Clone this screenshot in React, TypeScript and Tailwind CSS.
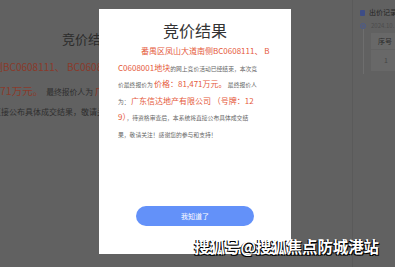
import React from 'react'

const RED = 'text-[8px] leading-none text-[#e5593b]'

function BackgroundPage() {
  return (
    <div className="flex h-full">
      {/* left article, dimmed by the overlay */}
      <div className="w-[352px] shrink-0 overflow-hidden">
        <div className="pl-[62px] pt-[30px] text-[13px] leading-[18px] text-[#2b2b2b]">竞价结果</div>
        <div className="-ml-[7px] mt-[9px] whitespace-nowrap leading-[20.5px]">
          <div className="text-[10px] text-[#8a3a2b]">侧BC0608111、 BC0608001地块</div>
          <div className="ml-[7px]">
            <span className="text-[10.5px] text-[#8a3a2b]">71万元。</span>
            <span className="ml-[3px] text-[7.8px] text-[#2e2e2e]">最终报价人为 </span>
            <span className="text-[10.5px] text-[#8a3a2b]">广东信达</span>
          </div>
          <div className="text-[8px] text-[#2e2e2e]">直接公布具体成交结果，敬请关注！</div>
        </div>
      </div>

      {/* right panel: bid records */}
      <div className="flex-1 border-l border-[#5a5a5a] pl-[7px] pt-[8px]">
        <div className="flex items-center gap-[4px]">
          <div className="h-[6px] w-[5px] rounded-[1px] bg-[#3e4d86]" />
          <span className="whitespace-nowrap text-[7px] leading-[9px] text-[#242424]">出价记录</span>
        </div>
        <div className="mt-[3px] flex">
          <div className="flex w-[6px] flex-col items-center">
            <div className="mt-[3px] flex h-[6px] w-[6px] items-center justify-center rounded-full border border-[#4b5a8c]">
              <div className="h-[2px] w-[2px] rounded-full bg-[#4b5a8c]" />
            </div>
            <div className="h-[45px] w-px bg-[#6e6e6e]" />
          </div>
          <div className="ml-[5px] flex-1">
            <div className="whitespace-nowrap text-[6px] leading-[12px] text-[#4c4c4c]">2024.10.</div>
            <div className="mt-[1px] h-[38px] bg-[#686868] text-[7px]">
              <div className="h-[17px] border-b border-[#626262] pl-[7px] leading-[17px] text-[#2c2c2c]">序号</div>
              <div className="pl-[13px] leading-[20px] text-[#464646]">1</div>
            </div>
          </div>
        </div>
      </div>
    </div>
  )
}

function ResultModal() {
  return (
    <div className="absolute left-[99px] top-[9px] flex h-[245px] w-[192px] flex-col bg-white pt-[11px]">
      <h2 className="text-center text-[16px] leading-[20px] text-[#333]">竞价结果</h2>
      <p className="mt-[4px] whitespace-nowrap px-[19px] indent-[23px] text-[5.8px] leading-[16.6px] text-[#666]">
        <span className={RED}>番禺区凤山大道南侧BC0608111、 B</span>
        <br />
        <span className={RED}>C0608001地块</span>的网上竞价活动已经结束，本次竞
        <br />
        价最终报价为 <span className={RED}>价格：81,471万元。</span> 最终报价人
        <br />
        为： <span className={RED}>广东信达地产有限公司 （号牌：12</span>
        <br />
        <span className={RED}>9）</span>，待资格审查后，本系统将直接公布具体成交结
        <br />
        果，敬请关注！感谢您的参与和支持！
      </p>
      <button className="mx-auto mb-[28px] mt-auto h-[20px] w-[118px] rounded-full bg-[#6391f9] text-[7px] text-white">
        我知道了
      </button>
    </div>
  )
}

export default function App() {
  return (
    <div className="relative h-[267px] w-[395px] overflow-hidden bg-[#616161] font-['Noto_Sans_CJK_SC','Noto_Sans',sans-serif]">
      <BackgroundPage />
      <ResultModal />
      {/* watermark */}
      <div className="absolute right-[16px] top-[236px] whitespace-nowrap text-[15.4px] font-bold leading-[20px] text-white [text-shadow:-1px_1px_0_#000,1px_1px_0_#000]">
        搜狐号@搜狐焦点防城港站
      </div>
    </div>
  )
}
